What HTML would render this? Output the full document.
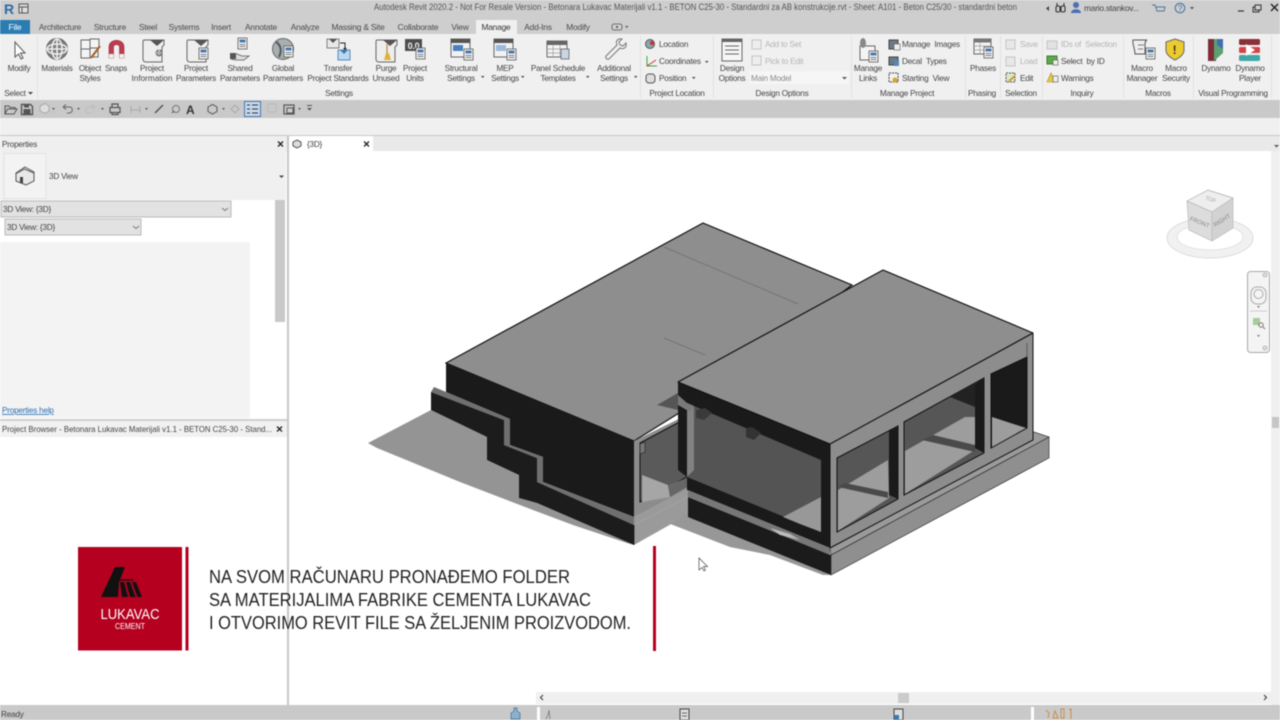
<!DOCTYPE html>
<html><head><meta charset="utf-8"><title>Revit</title>
<style>
html,body{margin:0;padding:0;background:#fff;width:1280px;height:720px;overflow:hidden}
svg{display:block;filter:blur(.4px)}
text{font-family:"Liberation Sans",sans-serif;font-size:8.2px;letter-spacing:-.22px;fill:#444}
.m{text-anchor:middle}
.d{fill:#b4b4b4}
.t{font-size:8.4px;letter-spacing:-.2px;fill:#4a4a4a}
.cap{font-size:18px;fill:#222;letter-spacing:0}
</style></head><body>
<svg width="1280" height="720" viewBox="0 0 1280 720" xmlns="http://www.w3.org/2000/svg">
<defs>
<g id="doc"><rect x="0" y="0" width="9" height="11" fill="#f4f6f8" stroke="#555" stroke-width=".8"/><rect x="1.500" y="1.500" width="6" height="3" fill="#4a78b0"/><path d="M1.500 6.500h6M1.500 8.500h6" stroke="#555" stroke-width=".7"/></g>
<g id="scroll"><path d="M2 2h20v5l-2 2v15H4c-2 0-3-1-3-3V4c0-1 0-2 1-2z" fill="#eee" stroke="#666"/><path d="M8 2h14l-7 6z" fill="#555"/></g>
</defs>

<!-- chrome backgrounds -->
<rect x="0" y="0" width="1280" height="34" fill="#cecece"/>
<rect x="0" y="34" width="1280" height="66" fill="#f0f0f0"/>
<rect x="0" y="100" width="1280" height="18" fill="#c9c9c9"/>
<rect x="0" y="118" width="1280" height="17" fill="#f0f0f0"/>
<rect x="0" y="135" width="1280" height="1.500" fill="#c8c8c8"/>
<rect x="373" y="136" width="907" height="15" fill="#e9e9e9"/>
<rect x="1271" y="151" width="9" height="555" fill="#f0f0f0"/>
<rect x="1272" y="417" width="7" height="11" fill="#c6c6c6"/>

<!-- title -->
<text x="4" y="14" style="font-size:14px;font-weight:bold;fill:#2b6aa5">R</text>
<rect x="19" y="4" width="9" height="9" fill="#ddd" stroke="#555"/><path d="M19 7h9M22 7v6" stroke="#555"/>
<text x="374" y="10" textLength="643" lengthAdjust="spacingAndGlyphs" style="font-size:8.800px;letter-spacing:0;fill:#555">Autodesk Revit 2020.2 - Not For Resale Version - Betonara Lukavac Materijali v1.1 - BETON C25-30 - Standardni za AB konstrukcije.rvt - Sheet: A101 - Beton C25/30 - standardni beton</text>
<path d="M1049 6l-3 2.500 3 2.500z" fill="#444"/>
<g fill="none" stroke="#333" stroke-width="1.100"><rect x="1056" y="6" width="4" height="6" rx="1.500"/><rect x="1061" y="6" width="4" height="6" rx="1.500"/><path d="M1057 6V3M1064 6V3M1060 7h1"/></g>
<circle cx="1076" cy="5" r="3" fill="#4a6fb5"/><path d="M1071 13c0-5 10-5 10 0z" fill="#4a6fb5"/>
<text x="1084" y="11" style="font-size:8.400px">mario.stankov...</text>
<path d="M1152 5h3l2 6h7l1-4h-9" fill="none" stroke="#4a7a9a"/>
<circle cx="1180" cy="8" r="4.800" fill="none" stroke="#3a6ea5"/><text x="1180" y="11" class="m" style="font-size:8px;fill:#3a6ea5">?</text>
<path d="M1190 7h4l-2 2.500z" fill="#555"/>
<path d="M1238 11h6" stroke="#333" stroke-width="1.200"/>
<rect x="1253" y="7" width="6" height="5" fill="none" stroke="#333"/><rect x="1255" y="5" width="6" height="5" fill="#cecece" stroke="#333"/>
<path d="M1271 4l7 7M1278 4l-7 7" stroke="#222" stroke-width="1.400"/>

<!-- tabs -->
<rect x="0" y="20" width="30" height="14" fill="#2a7cb3"/>
<text x="15" y="30" class="m" style="font-size:8.600px;fill:#fff">File</text>
<rect x="476" y="20" width="41" height="14" fill="#f0f0f0"/>
<text x="60" y="30" class="m t">Architecture</text>
<text x="110" y="30" class="m t">Structure</text>
<text x="148" y="30" class="m t">Steel</text>
<text x="184" y="30" class="m t">Systems</text>
<text x="221" y="30" class="m t">Insert</text>
<text x="261" y="30" class="m t">Annotate</text>
<text x="305" y="30" class="m t">Analyze</text>
<text x="358" y="30" class="m t">Massing &amp; Site</text>
<text x="418" y="30" class="m t">Collaborate</text>
<text x="460" y="30" class="m t">View</text>
<text x="496" y="30" class="m t" style="fill:#333">Manage</text>
<text x="538" y="30" class="m t">Add-Ins</text>
<text x="578" y="30" class="m t">Modify</text>
<rect x="612" y="24" width="10" height="6" rx="2" fill="none" stroke="#555" stroke-width=".8"/><circle cx="617" cy="27" r="1" fill="#444"/><path d="M625 26h3.500l-1.750 2z" fill="#555"/>

<!-- panel separators -->
<g stroke="#e0e0e0" stroke-width="1">
<path d="M37.500 36v62M640.500 36v62M713.500 36v62M851.500 36v62M965.500 36v62M1000.500 36v62M1042.500 36v62M1123.500 36v62M1193.500 36v62M1271.500 36v62"/>
</g>

<!-- ribbon icons -->
<path d="M15 42v15l3.500-3 2.500 5 2-1-2.500-5h4.500z" fill="#fff" stroke="#555"/>
<!-- materials -->
<circle cx="57" cy="49" r="10.500" fill="#7c7c7c" stroke="#666"/>
<g stroke="#eee" stroke-width="1.600" fill="none"><ellipse cx="57" cy="49" rx="5" ry="10"/><ellipse cx="57" cy="49" rx="10" ry="5"/><path d="M57 39v20M47 49h20"/></g>
<!-- object styles -->
<g fill="#f4f4f4" stroke="#666"><rect x="81" y="40" width="9" height="9"/><rect x="90" y="39" width="9" height="9"/><rect x="81" y="49" width="9" height="9"/><rect x="90" y="48" width="8" height="9"/></g>
<path d="M100 46l-9 12" stroke="#a8642a" stroke-width="2.200"/>
<!-- snaps -->
<path d="M109 58V47c0-9 15-9 15 0v11h-4.500V47c0-3-6-3-6 0v11z" fill="#bf3b4e" stroke="#8f2a38" stroke-width=".6"/>
<rect x="109" y="54" width="4.500" height="4" fill="#eee"/><rect x="119.500" y="54" width="4.500" height="4" fill="#eee"/>
<!-- project info etc -->
<use href="#scroll" x="142" y="38"/>
<path d="M158 50a3 3 0 1 0 2 0v6h-2z" fill="#ddd" stroke="#555" stroke-width=".8"/>
<use href="#scroll" x="186" y="38"/><use href="#doc" x="199" y="48"/>
<use href="#doc" x="238" y="38"/><path d="M231 54h6l5 2h7l-5 4h-9l-4-1z" fill="#ddd" stroke="#555" stroke-width=".8"/><rect x="230" y="53" width="6" height="6" fill="#555"/>
<circle cx="283" cy="49" r="10.500" fill="#a6b0ad" stroke="#666"/><path d="M276 42c5 3 6 9 3 15" stroke="#556" fill="none" stroke-width="2"/><use href="#doc" x="284" y="46"/>
<!-- transfer -->
<rect x="327" y="39" width="12" height="9" fill="#e8e8e8" stroke="#666" stroke-width=".8"/><path d="M329 39h8l-4 4z" fill="#555"/>
<path d="M340 43h5v5" stroke="#222" fill="none"/><path d="M343 48h4l-2 2.500z" fill="#222"/>
<rect x="338" y="50" width="12" height="10" fill="#bcd8ee" stroke="#3a78b0" stroke-width=".8"/><path d="M340 50h8l-4 4z" fill="#3a78b0"/>
<!-- purge -->
<use href="#scroll" x="375" y="38"/><path d="M387 44v9" stroke="#b98a2a" stroke-width="1.200"/><path d="M384 60l2-7h3l2 7z" fill="#e3b23a"/>
<!-- units -->
<rect x="405" y="39" width="17" height="12" fill="#4d4d4d"/><text x="413.500" y="49" class="m" style="font-size:9px;font-weight:bold;fill:#eee">0.0</text><use href="#doc" x="416" y="48"/>
<!-- settings -->
<g><rect x="451" y="39" width="19" height="18" fill="#f2f2f2" stroke="#666"/><rect x="451" y="39" width="19" height="4" fill="#555"/><rect x="453" y="45" width="10" height="6" fill="#4a80bf"/><use href="#doc" x="464" y="49"/></g>
<g><rect x="494" y="39" width="19" height="18" fill="#f2f2f2" stroke="#666"/><rect x="494" y="39" width="19" height="4" fill="#555"/><rect x="496" y="45" width="10" height="6" fill="#9ab9dc"/><use href="#doc" x="507" y="49"/></g>
<g><rect x="547" y="41" width="20" height="16" fill="#f4f4f4" stroke="#666"/><rect x="547" y="41" width="20" height="4" fill="#666"/><path d="M547 49h20M547 53h20M553 45v12M560 45v12" stroke="#999" stroke-width=".7"/><rect x="561" y="49" width="8" height="10" fill="#c9d6e4" stroke="#555" stroke-width=".7"/></g>
<path d="M606 56l11-11c-2-4 1-7 5-6l-3 3 1 3 3 1 3-3c1 4-2 7-6 5l-11 11c-2 1-4-1-3-3z" fill="#eee" stroke="#777"/>
<!-- dropdown carets -->
<g fill="#444"><path d="M481 76h3.500l-1.750 2zM521 76h3.500l-1.750 2zM586 76h3.500l-1.750 2zM634 76h3.500l-1.750 2zM28 92h5l-2.500 2.500z"/></g>

<!-- labels -->
<text x="19" y="71" class="m">Modify</text>
<text x="57" y="71" class="m">Materials</text>
<text x="90" y="71" class="m">Object</text><text x="90" y="81" class="m">Styles</text>
<text x="116" y="71" class="m">Snaps</text>
<text x="152" y="71" class="m">Project</text><text x="152" y="81" class="m" style="letter-spacing:0">Information</text>
<text x="196" y="71" class="m">Project</text><text x="196" y="81" class="m">Parameters</text>
<text x="240" y="71" class="m">Shared</text><text x="240" y="81" class="m">Parameters</text>
<text x="283" y="71" class="m">Global</text><text x="283" y="81" class="m">Parameters</text>
<text x="338" y="71" class="m">Transfer</text><text x="338" y="81" class="m">Project Standards</text>
<text x="386" y="71" class="m">Purge</text><text x="386" y="81" class="m">Unused</text>
<text x="415" y="71" class="m">Project</text><text x="415" y="81" class="m">Units</text>
<text x="461" y="71" class="m">Structural</text><text x="461" y="81" class="m">Settings</text>
<text x="505" y="71" class="m">MEP</text><text x="505" y="81" class="m">Settings</text>
<text x="558" y="71" class="m">Panel Schedule</text><text x="558" y="81" class="m">Templates</text>
<text x="614" y="71" class="m">Additional</text><text x="614" y="81" class="m">Settings</text>
<text x="15" y="96" class="m">Select</text>
<text x="339" y="96" class="m">Settings</text>
<text x="677" y="96" class="m">Project Location</text>
<text x="782" y="96" class="m">Design Options</text>
<text x="907" y="96" class="m">Manage Project</text>
<text x="982" y="96" class="m">Phasing</text>
<text x="1021" y="96" class="m">Selection</text>
<text x="1082" y="96" class="m">Inquiry</text>
<text x="1158" y="96" class="m">Macros</text>
<text x="1233" y="96" class="m">Visual Programming</text>

<!-- project location -->
<circle cx="650" cy="44" r="4.500" fill="#8aa" stroke="#556"/><circle cx="652" cy="43" r="2.200" fill="#c33"/>
<text x="659" y="47">Location</text>
<path d="M647 56v10h10" fill="none" stroke="#3a3"/><path d="M647 66l9-6" stroke="#c33"/>
<text x="659" y="64">Coordinates</text><path d="M705 61h3.500l-1.750 2z" fill="#444"/>
<rect x="646" y="74" width="9" height="9" rx="3" fill="#ddd" stroke="#555"/>
<text x="659" y="81">Position</text><path d="M692 77h3.500l-1.750 2z" fill="#444"/>

<!-- design options -->
<rect x="722" y="39" width="20" height="22" fill="#f6f6f6" stroke="#666"/><rect x="722" y="39" width="20" height="3" fill="#666"/>
<path d="M725 46h14M725 50h14M725 54h14" stroke="#666"/>
<text x="732" y="71" class="m">Design</text><text x="732" y="81" class="m">Options</text>
<rect x="752" y="40" width="9" height="9" fill="#eee" stroke="#c4c4c4"/><text x="765" y="47" class="d">Add to Set</text>
<rect x="752" y="56" width="9" height="9" fill="#eee" stroke="#c4c4c4"/><text x="765" y="64" class="d">Pick to Edit</text>
<rect x="749" y="71" width="100" height="13" fill="#f6f6f6"/><text x="751" y="81" style="fill:#8a8a8a">Main Model</text><path d="M842 77h5l-2.500 2.500z" fill="#555"/>

<!-- manage project -->
<rect x="860" y="46" width="15" height="14" fill="#f4f4f4" stroke="#666"/><ellipse cx="863" cy="43" rx="3" ry="5" fill="#888"/><use href="#doc" x="869" y="51"/>
<text x="868" y="71" class="m">Manage</text><text x="868" y="81" class="m">Links</text>
<rect x="889" y="40" width="9" height="9" fill="#6b7a88" stroke="#444"/><rect x="894" y="44" width="6" height="6" fill="#eee" stroke="#555" stroke-width=".6"/>
<text x="902" y="47">Manage&#160;&#160;Images</text>
<rect x="889" y="57" width="9" height="8" fill="#6b7a88" stroke="#444"/><rect x="894" y="60" width="5" height="6" fill="#5a87b5"/>
<text x="902" y="64">Decal&#160;&#160;Types</text>
<rect x="889" y="73" width="9" height="9" fill="none" stroke="#444" stroke-dasharray="2 1"/><circle cx="895" cy="80" r="2.500" fill="#d9a52c"/>
<text x="902" y="81">Starting&#160;&#160;View</text>

<!-- phasing -->
<rect x="974" y="39" width="17" height="15" fill="#f4f4f4" stroke="#666"/><rect x="974" y="39" width="17" height="3.500" fill="#777"/><path d="M974 46h17M974 50h17M980 42v12" stroke="#999" stroke-width=".7"/><use href="#doc" x="984" y="47"/>
<text x="983" y="71" class="m">Phases</text>

<!-- selection -->
<rect x="1006" y="40" width="9" height="9" fill="#e8e8e8" stroke="#c4c4c4"/><text x="1020" y="47" class="d">Save</text>
<rect x="1006" y="57" width="9" height="9" fill="#e8e8e8" stroke="#c4c4c4"/><text x="1020" y="64" class="d">Load</text>
<rect x="1006" y="73" width="9" height="9" fill="#dbe8c8" stroke="#555" stroke-dasharray="2 1"/><path d="M1009 81l6-5" stroke="#c98a1a" stroke-width="1.500"/><text x="1020" y="81">Edit</text>

<!-- inquiry -->
<rect x="1047" y="41" width="10" height="8" fill="#e2e2e2" stroke="#c4c4c4"/><text x="1061" y="47" class="d">IDs of&#160;&#160;Selection</text>
<rect x="1047" y="56" width="10" height="8" fill="#5fa84b" stroke="#3c7a30"/><rect x="1053" y="60" width="5" height="5" fill="#eee" stroke="#555" stroke-width=".6"/><text x="1061" y="64">Select&#160;&#160;by ID</text>
<path d="M1051 73l4 9h-8z" fill="#e9c941" stroke="#a58a20" stroke-width=".6"/><rect x="1053" y="76" width="5" height="6" fill="#eee" stroke="#555" stroke-width=".6"/><text x="1061" y="81">Warnings</text>

<!-- macros -->
<path d="M1133 40h14c-2 1-2 3-2 5v9h-10c0-5-3-11-2-14z" fill="#eee" stroke="#555"/><path d="M1138 45h6M1138 49h5" stroke="#555" stroke-width=".8"/><use href="#doc" x="1146" y="48"/>
<text x="1142" y="71" class="m">Macro</text><text x="1142" y="81" class="m">Manager</text>
<path d="M1175 39l9 3v8c0 5-5 8-9 10-4-2-9-5-9-10v-8z" fill="#eccb2e" stroke="#666"/><text x="1174.500" y="54" class="m" style="font-size:12px;font-weight:bold;fill:#333">!</text>
<text x="1176" y="71" class="m">Macro</text><text x="1176" y="81" class="m">Security</text>

<!-- dynamo -->
<path d="M1208 39h9l-1 22h-8z" fill="#7e2d38"/><path d="M1214 39h9v14l-9 8z" fill="#5aa070"/><path d="M1217 39h6v10l-6-4z" fill="#3f6fb0"/>
<text x="1216" y="71" class="m">Dynamo</text>
<rect x="1239" y="39" width="21" height="6" rx="1.500" fill="#8a3038"/><rect x="1239" y="47" width="21" height="6" rx="1.500" fill="#d2444a"/><rect x="1239" y="55" width="21" height="6" rx="1.500" fill="#3fa7a5"/><path d="M1246 44l9 6-9 6z" fill="#fff"/>
<text x="1250" y="71" class="m">Dynamo</text><text x="1250" y="81" class="m">Player</text>

<!-- QAT -->
<g fill="none" stroke="#555" stroke-width="1">
<path d="M5 114v-8h4l1 1.500h5v2M5 114l2.500-5h9.500l-3 5z"/>
<path d="M21.500 104.500h9l2 2v8h-11z" stroke-width="1.400"/><rect x="24" y="109.500" width="6" height="4.500" fill="#555"/><rect x="24" y="104.500" width="5" height="3" fill="#555" stroke="none"/>
<path d="M40 106l5-2.500 4 2.500v5l-4 2.500-5-2.500z" stroke="#aaa" fill="#ddd"/>
<path d="M63 107h7c3 0 3 5 0 6h-3M63 107l3-2.500M63 107l3 2.500" stroke="#666"/>
<path d="M95 107h-7c-3 0-3 5 0 6h3M95 107l-3-2.500M95 107l-3 2.500" stroke="#bbb"/>
<rect x="110" y="107.500" width="10" height="5" stroke-width="1.200"/><path d="M112 107v-3h6v3M112 112v2.500h6V112" stroke-width="1.200"/>
<path d="M131 106v7M140 106v7M131 110h9" stroke="#aaa"/>
<path d="M155 113l8-8" stroke-width="1.500"/>
<circle cx="176" cy="109" r="3.500" stroke="#777"/><path d="M172 113l2-2"/>
<path d="M208 107l4.500-2.500 4.500 2.500v4.500l-4.500 2.500-4.500-2.500z"/>
<path d="M235 105l4 4-4 4-4-4z" stroke="#aaa"/>
<rect x="268" y="104" width="8" height="8" stroke="#bbb"/>
<rect x="284" y="105" width="10" height="9" stroke-width="1.200"/><rect x="287" y="108" width="6" height="5" fill="#ccc"/>
</g>
<text x="186" y="114" style="font-size:12px;font-weight:bold;fill:#333;letter-spacing:0">A</text>
<rect x="244.500" y="101.500" width="16" height="15" fill="#c6d8ec" stroke="#4a78b0"/>
<path d="M247 105h3M252 105h6M247 109h3M252 109h6M247 113h3M252 113h6" stroke="#333"/>
<g fill="#555"><path d="M52 108h3l-1.500 2zM77 108h3l-1.500 2zM101 108h3l-1.500 2zM145 108h3l-1.500 2zM222 108h3l-1.500 2zM298 108h3l-1.500 2zM307 108h5l-2.500 2.500z"/><path d="M307 105h5v1h-5z"/></g>

<!-- properties panel -->
<rect x="0" y="136" width="287" height="16" fill="#efefef"/>
<text x="2" y="147">Properties</text>
<path d="M278 141.500l5 5M283 141.500l-5 5" stroke="#222" stroke-width="1.300"/>
<rect x="0" y="152" width="286" height="48" fill="#f0f0f0"/>
<rect x="4" y="153.500" width="42" height="45" fill="#f3f3f3" stroke="#e2e2e2"/>
<path d="M25 167l9 5v9l-8 4-10-4v-8z" fill="#e8e8e8" stroke="#555"/><path d="M15.500 174l9-5 9.500 4" fill="none" stroke="#555"/><rect x="20" y="177" width="3" height="6" fill="#444"/>
<text x="49" y="179">3D View</text>
<path d="M279 175.500h5l-2.500 2.500z" fill="#444"/>
<rect x="275" y="200" width="10" height="122" fill="#c9c9c9"/>
<rect x="1" y="201" width="230" height="16" fill="#e2e2e2" stroke="#bbb"/>
<text x="3" y="212">3D View: {3D}</text>
<path d="M222 208l3 2.500 3-2.500" fill="none" stroke="#777"/>
<rect x="5" y="219" width="136" height="16" fill="#e2e2e2" stroke="#bbb"/>
<text x="7" y="230">3D View: {3D}</text>
<path d="M133 226l3 2.500 3-2.500" fill="none" stroke="#777"/>
<rect x="0" y="242" width="250" height="176" fill="#f3f3f3"/>
<text x="2" y="413" style="fill:#2a6fb0;text-decoration:underline">Properties help</text>
<rect x="0" y="419" width="287" height="2" fill="#cfcfcf"/>
<rect x="0" y="421" width="287" height="16" fill="#f1f1f1"/>
<text x="2" y="432" textLength="270" lengthAdjust="spacingAndGlyphs" style="font-size:8.400px;letter-spacing:0">Project Browser - Betonara Lukavac Materijali v1.1 - BETON C25-30 - Stand...</text>
<path d="M277 426.500l5 5M282 426.500l-5 5" stroke="#222" stroke-width="1.300"/>
<rect x="287" y="136" width="2" height="570" fill="#c6c6c6"/>

<!-- view tab -->
<rect x="289" y="136" width="84" height="15" fill="#fff"/>
<path d="M297 140l4 2v4l-4 2-4-2v-4z" fill="#ddd" stroke="#555"/>
<text x="307" y="147">{3D}</text>
<path d="M364 141.500l5 5M369 141.500l-5 5" stroke="#222" stroke-width="1.300"/>
<path d="M1274 145h5l-2.500 2.500z" fill="#555"/>

<!-- MODEL -->
<polygon points="368,443 431,410 487,437 487,460 519,475 519,498 537,503 634,545 627,543 573,525 533,510 460,482 377,448" fill="#949494"/>
<polygon points="660,520 688,505 831,575 823,575 770,555 730,547" fill="#979797"/>

<!-- main roof -->
<polygon points="703,223 852,285 700,400 634,441 446,363" fill="#8e8e8e" stroke="#111" stroke-width="1.200"/>
<path d="M664 247L798 304M664 338L705 355" stroke="#6c6c6c" stroke-width=".7"/>
<polygon points="657,405 678,393 678,410" fill="#555"/>
<!-- main dark face -->
<polygon points="446,363 634,441 634,517 543,482 543,457 510,445 510,419 446,392" fill="#1a1a1a"/>
<!-- plinth strip -->
<polygon points="434,387 446,392 510,419 510,445 543,457 543,482 634,517 634,525 537,482 537,458 504,445 504,420 431,392" fill="#6f6f6f"/>
<polygon points="431,392 504,420 504,445 537,458 537,482 634,525 634,545 537,503 519,498 519,475 487,460 487,437 431,410" fill="#1c1c1c"/>
<!-- left wing wall -->
<polygon points="634,441 703,407 688,490 634,517" fill="#8c8c8c"/>
<polygon points="640,443 687,418 687,477 640,502" fill="#5a5a5a" stroke="#111" stroke-width="1"/>
<polygon points="642,475 668,485 670,497 642,502" fill="#a6a6a6"/>
<polygon points="668,485 687,478 687,487 670,497" fill="#666"/>
<polygon points="640,444 645,442 645,452 640,454" fill="#777" stroke="#222" stroke-width=".6"/>
<polygon points="634,517 688,488 688,497 634,525" fill="#9a9a9a"/>
<polygon points="634,525 688,497 688,512 673,523 634,545" fill="#9a9a9a"/>
<path d="M634 525v20" stroke="#111" stroke-width=".7"/>

<!-- right block plinth -->
<polygon points="688,497 831,555 831,575 688,517" fill="#1b1b1b"/>
<polygon points="831,555 1049,437 1049,458 831,575" fill="#8f8f8f" stroke="#222" stroke-width=".6"/>
<polygon points="830,548 1034,432 1049,437 831,555" fill="#9a9a9a" stroke="#222" stroke-width=".6"/>

<!-- right block left face -->
<polygon points="678,382 830,443 830,548 687,490 687,477 678,470" fill="#1a1a1a"/>
<polygon points="687,403 821,460 821,532 687,477" fill="#545454"/>
<polygon points="783,517 821,497 821,532 800,524" fill="#989898"/>
<polygon points="687,403 694,406 694,470 687,477" fill="#828282"/>
<polygon points="678,395 687,403 694,406 690,412 678,405" fill="#7a7a7a"/>
<polygon points="696,410 705,408 712,413 704,420 696,418" fill="#3a3a3a"/>
<polygon points="746,428 752,427 761,433 754,440 746,437" fill="#333"/>
<polygon points="688,490 830,548 830,555 688,497" fill="#777"/>
<polygon points="770,528 790,534 800,540 780,535" fill="#bbb"/>

<!-- right block wall -->
<polygon points="830,443 1033,333 1033,440 830,548" fill="#8d8d8d"/>
<!-- opening 1 -->
<polygon points="837,458 898,426 898,499 837,532" fill="#565656" stroke="#111" stroke-width="1"/>
<polygon points="838,490 888,460 889,498 838,531" fill="#9d9d9d"/>
<polygon points="845,483 888,492 888,498 838,487" fill="#4a4a4a"/>
<polygon points="889,430 898,426 898,499 889,495" fill="#1a1a1a"/>
<!-- opening 2 -->
<polygon points="904,422 984,378 984,453 904,495" fill="#565656" stroke="#111" stroke-width="1"/>
<polygon points="905,451 965,417 975,417 975,450 905,494" fill="#9d9d9d"/>
<polygon points="933,435 975,445 975,452 922,440" fill="#4a4a4a"/>
<polygon points="950,397 975,383 975,407" fill="#222"/>
<polygon points="975,384 984,378 984,453 975,448" fill="#1a1a1a"/>
<!-- opening 3 -->
<polygon points="991,374 1027,357 1027,428 991,448" fill="#1a1a1a" stroke="#111" stroke-width="1"/>
<polygon points="992,417 1026,428 992,447" fill="#9d9d9d"/>
<path d="M1027 343v14" stroke="#444" stroke-width=".7"/>
<path d="M830 444V548M830 548L1033 440V333" stroke="#111" stroke-width="1" fill="none"/>
<!-- right roof -->
<polygon points="678,382 883,270 1033,333 830,444" fill="#8e8e8e" stroke="#111" stroke-width="1.200" stroke-linejoin="round"/>

<!-- cursor -->
<path d="M699 558v12l3-2.500 2 3.500 1.500-1-2-3.500h4z" fill="#fff" stroke="#444" stroke-width=".7"/>

<!-- nav cube -->
<ellipse cx="1210" cy="238" rx="43" ry="20" fill="#f1f1f1" stroke="#ddd"/>
<ellipse cx="1210" cy="237" rx="33" ry="13" fill="#fff" stroke="#e2e2e2"/>
<polygon points="1187,201 1208,190 1233,198 1212,212" fill="#eee" stroke="#aaa" stroke-width=".7"/>
<polygon points="1187,201 1212,212 1212,241 1189,230" fill="#dcdcdc" stroke="#bbb" stroke-width=".7"/>
<polygon points="1212,212 1233,198 1233,228 1212,241" fill="#d2d2d2" stroke="#bbb" stroke-width=".7"/>
<text x="1199" y="224" class="m" transform="rotate(22 1199 224)" style="font-size:6px;fill:#888;letter-spacing:0">FRONT</text>
<text x="1223" y="222" class="m" transform="rotate(-32 1223 222)" style="font-size:6px;fill:#888;letter-spacing:0">RIGHT</text>
<text x="1210" y="201" class="m" transform="rotate(20 1210 201)" style="font-size:5.500px;fill:#aaa">TOP</text>
<!-- nav bar -->
<rect x="1247.500" y="271.500" width="22" height="81" rx="3" fill="#f4f4f4" stroke="#aaa"/>
<circle cx="1265" cy="275" r="2" fill="#ddd" stroke="#999" stroke-width=".6"/>
<circle cx="1265" cy="348" r="2" fill="#ddd" stroke="#999" stroke-width=".6"/>
<rect x="1251" y="287" width="15" height="17" rx="6" fill="none" stroke="#aaa"/><circle cx="1258.500" cy="294" r="4.500" fill="none" stroke="#aaa"/>
<path d="M1257 306h3l-1.500 2z" fill="#777"/><path d="M1250 311h17" stroke="#ccc"/>
<rect x="1253" y="318" width="7" height="7" fill="#a6cc9a"/><circle cx="1261" cy="325" r="2.200" fill="none" stroke="#777"/><path d="M1263 327l2 2" stroke="#777"/>
<path d="M1257 335h3l-1.500 2z" fill="#777"/>

<!-- horizontal scroll -->
<rect x="536" y="692" width="735" height="12" fill="#f0f0f0"/>
<rect x="898" y="693" width="11" height="10" fill="#cbcbcb"/>
<path d="M543 695l-2.500 2.500 2.500 2.500M1264 695l2.500 2.500-2.500 2.500" fill="none" stroke="#333"/>

<!-- status -->
<rect x="0" y="705" width="1280" height="15" fill="#c9c9c9"/>
<text x="1" y="717">Ready</text>
<path d="M511 719v-6l3-2v-3h3v3l3 2v6z" fill="#8fb0c8" stroke="#3a6c9a" stroke-width=".7"/>
<rect x="537" y="707" width="3" height="13" fill="#fff"/><path d="M546 719l2-4 1-5 1 9" fill="none" stroke="#888"/>
<rect x="680" y="709" width="9" height="11" fill="#ddd" stroke="#444"/><path d="M682 713h5M682 716h5" stroke="#444" stroke-width=".7"/>
<rect x="894" y="709" width="9" height="11" fill="#ddd" stroke="#444"/><rect x="894" y="715" width="5" height="5" fill="#3a78b0"/>
<rect x="1031" y="707" width="3" height="13" fill="#fff"/>
<path d="M1046 710l3 3-1 5M1053 718l2-7 3 7zM1061 709h3v9h-3zM1069 710l2-1v10" fill="none" stroke="#c9904a"/>

<!-- overlay -->
<rect x="78" y="547" width="104" height="103.500" fill="#b5001f"/>
<rect x="185.500" y="547" width="3" height="103.500" fill="#b5001f"/>
<rect x="653" y="546" width="3" height="105" fill="#b5001f"/>
<polygon points="115,567 125,567 119,582 118,597 101,597" fill="#111"/>
<polygon points="120,582 124,582 128,597 122,597" fill="#111"/>
<polygon points="126,582 130,582 135.500,597 130,597" fill="#111"/>
<polygon points="132,582 136,582 142,597 137.500,597" fill="#111"/>
<path d="M118.500 580h15" stroke="#111" stroke-width="1.200"/>
<text x="130" y="619" class="m" textLength="59" lengthAdjust="spacingAndGlyphs" style="font-size:15px;fill:#fff;letter-spacing:0">LUKAVAC</text>
<text x="130" y="629" class="m" textLength="30" lengthAdjust="spacingAndGlyphs" style="font-size:8.500px;fill:#fff;letter-spacing:0">CEMENT</text>
<text x="209" y="583" class="cap" textLength="361" lengthAdjust="spacingAndGlyphs">NA SVOM RAČUNARU PRONAĐEMO FOLDER</text>
<text x="209" y="606" class="cap" textLength="382" lengthAdjust="spacingAndGlyphs">SA MATERIJALIMA FABRIKE CEMENTA LUKAVAC</text>
<text x="209" y="629" class="cap" textLength="422" lengthAdjust="spacingAndGlyphs">I OTVORIMO REVIT FILE SA ŽELJENIM PROIZVODOM.</text>
</svg>
</body></html>
